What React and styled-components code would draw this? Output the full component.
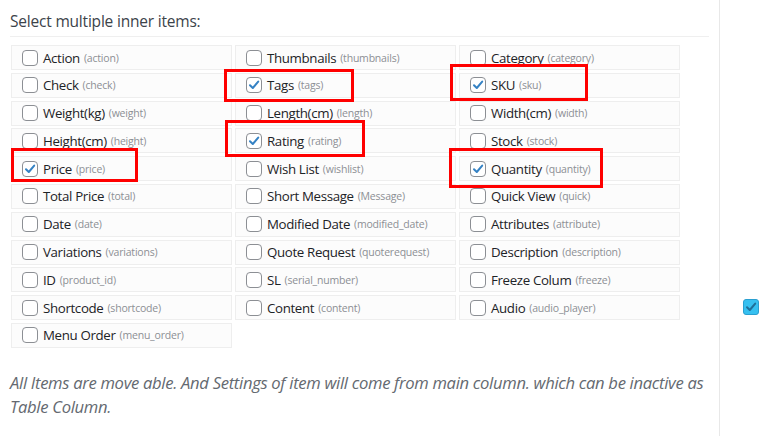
import React from "react";
import styled, { createGlobalStyle } from "styled-components";

const Global = createGlobalStyle`
  html, body { margin: 0; padding: 0; background: #fff; }
  body { font-family: "Open Sans", "Noto Sans", sans-serif; color: #1d2327; }
`;

const Page = styled.div`
  display: flex;
  width: 772px;
  height: 436px;
  overflow: hidden;
`;

const Main = styled.div`
  position: relative;
  width: 699px;
  padding: 0 10px;
  border-right: 1px solid #e8e8e8;
`;

const Heading = styled.h3`
  margin: 0;
  padding: 10px 0 0;
  height: 26px;
  font-size: 15.5px;
  font-weight: 400;
  color: #3c434a;
  letter-spacing: -0.2px;
  border-bottom: 1px solid #efefef;
`;

const Grid = styled.div`
  display: grid;
  grid-template-columns: repeat(3, 221px);
  grid-auto-rows: 25px;
  column-gap: 3px;
  row-gap: 2.8px;
  margin: 8px 0 0 1px;
`;

const Cell = styled.label`
  display: flex;
  align-items: center;
  gap: 5px;
  box-sizing: border-box;
  padding-left: 10px;
  background: #fcfcfc;
  border: 1px solid #eeeeee;
  white-space: nowrap;
`;

const Box = styled.span`
  flex: none;
  width: 16px;
  height: 16px;
  box-sizing: border-box;
  border: 1px solid #8c8f94;
  border-radius: 4px;
  background: #fff;
  display: flex;
  align-items: center;
  justify-content: center;
`;

const Label = styled.span`
  font-size: 13.3px;
  color: #1d2327;
  letter-spacing: -0.35px;
`;

const Key = styled.span`
  margin-left: -1px;
  font-size: 10.5px;
  color: #8c8f94;
  letter-spacing: -0.2px;
`;

const Note = styled.p`
  margin: 23px 0 0;
  font-size: 16.6px;
  line-height: 24px;
  font-style: italic;
  color: #646970;
  letter-spacing: -0.3px;
`;

const Mark = styled.div`
  position: absolute;
  border: 3px solid #ff0000;
  box-sizing: border-box;
  pointer-events: none;
`;

const Side = styled.div`
  flex: 1;
  padding: 299px 0 0 23px;
`;

const BlueBox = styled.span`
  display: flex;
  align-items: center;
  justify-content: center;
  width: 16px;
  height: 16px;
  box-sizing: border-box;
  border: 1px solid #2a9fd0;
  border-radius: 3px;
  background: #36c0f0;
`;

const Check = ({ color = "#3582c4" }) => (
  <svg width="12" height="12" viewBox="0 0 12 12">
    <path d="M2 6.2 L4.8 9 L10.2 2.6" fill="none" stroke={color} strokeWidth="2" strokeLinecap="round" strokeLinejoin="round" />
  </svg>
);

const items = [
  ["Action", "action"], ["Thumbnails", "thumbnails"], ["Category", "category"],
  ["Check", "check"], ["Tags", "tags", true], ["SKU", "sku", true],
  ["Weight(kg)", "weight"], ["Length(cm)", "length"], ["Width(cm)", "width"],
  ["Height(cm)", "height"], ["Rating", "rating", true], ["Stock", "stock"],
  ["Price", "price", true], ["Wish List", "wishlist"], ["Quantity", "quantity", true],
  ["Total Price", "total"], ["Short Message", "Message"], ["Quick View", "quick"],
  ["Date", "date"], ["Modified Date", "modified_date"], ["Attributes", "attribute"],
  ["Variations", "variations"], ["Quote Request", "quoterequest"], ["Description", "description"],
  ["ID", "product_id"], ["SL", "serial_number"], ["Freeze Colum", "freeze"],
  ["Shortcode", "shortcode"], ["Content", "content"], ["Audio", "audio_player"],
  ["Menu Order", "menu_order"],
];

const marks = [
  { left: 224, top: 69, width: 130, height: 33 },
  { left: 450, top: 64, width: 138, height: 37 },
  { left: 225, top: 120, width: 140, height: 37 },
  { left: 11, top: 148, width: 127, height: 34 },
  { left: 449, top: 148, width: 154, height: 40 },
];

export default function App() {
  return (
    <>
      <Global />
      <Page>
        <Main>
          <Heading>Select multiple inner items:</Heading>
          <Grid>
            {items.map(([label, key, checked]) => (
              <Cell key={key}>
                <Box>{checked && <Check />}</Box>
                <Label>{label}</Label>
                <Key>({key})</Key>
              </Cell>
            ))}
          </Grid>
          <Note>
            All Items are move able. And Settings of item will come from main column. which can be inactive as Table Column.
          </Note>
          {marks.map((m, i) => (
            <Mark key={i} style={m} />
          ))}
        </Main>
        <Side>
          <BlueBox>
            <Check color="#1f6f99" />
          </BlueBox>
        </Side>
      </Page>
    </>
  );
}
